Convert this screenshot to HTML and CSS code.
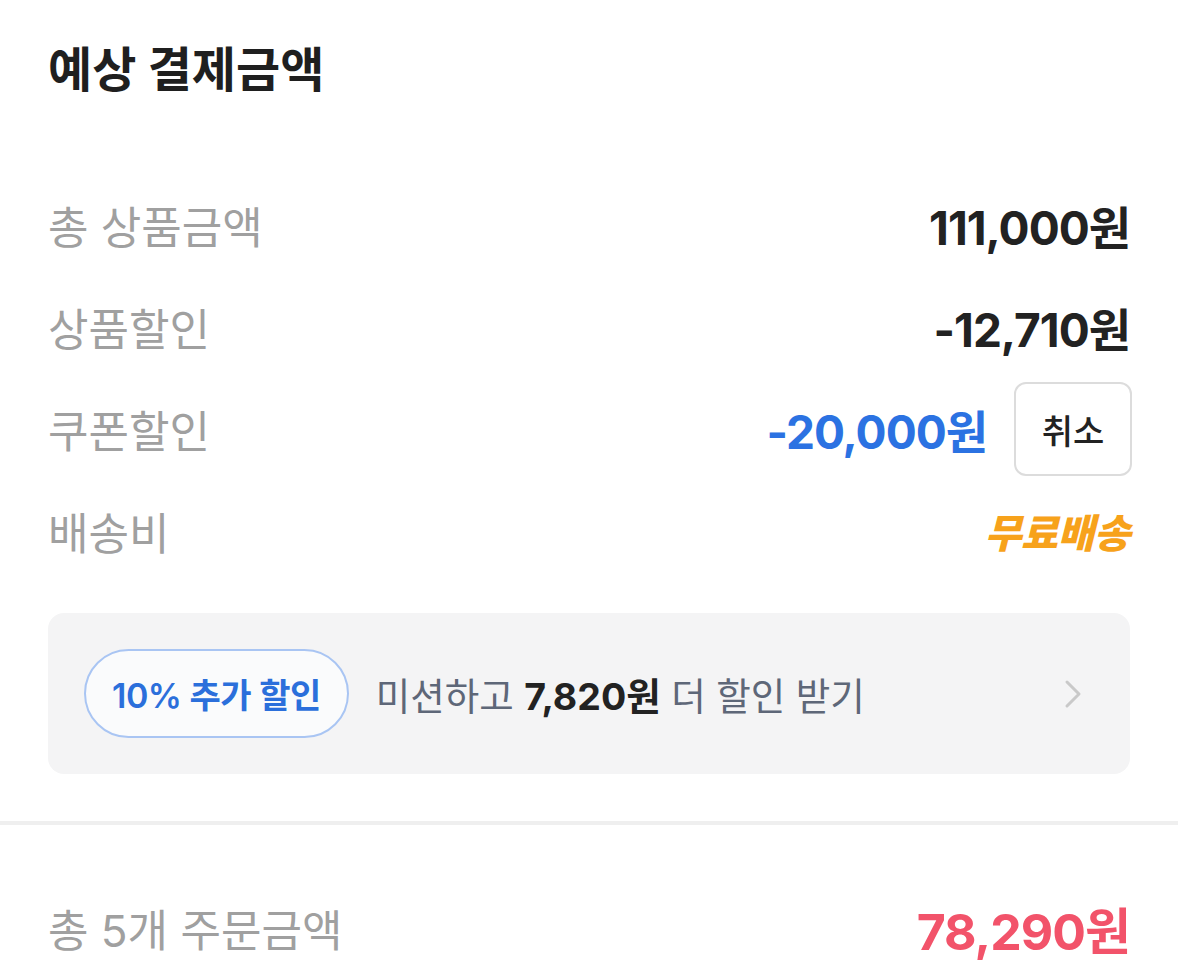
FILE: index.html
```html
<!DOCTYPE html>
<html lang="ko">
  <head>
    <meta charset="UTF-8" />
    <meta name="viewport" content="width=device-width, initial-scale=1.0" />
    <title>예상 결제금액</title>
    <link rel="stylesheet" href="styles.css">
  </head>
  <body>
    <section class="payment-summary">
      <h1>예상 결제금액</h1>
      <ul class="price-list">
        <li class="price-row">
          <span class="price-label">총 상품금액</span>
          <span class="price-value">111,000원</span>
        </li>
        <li class="price-row">
          <span class="price-label">상품할인</span>
          <span class="price-value">-12,710원</span>
        </li>
        <li class="price-row">
          <span class="price-label">쿠폰할인</span>
          <div class="coupon-value">
            <span class="price-value coupon">-20,000원</span>
            <button class="cancel-button">취소</button>
          </div>
        </li>
        <li class="price-row">
          <span class="price-label">배송비</span>
          <span class="price-value free-shipping">무료배송</span>
        </li>
      </ul>
      <a class="mission-box" href="#">
        <span class="mission-badge">10% 추가 할인</span>
        <span class="mission-text">미션하고 <strong>7,820원</strong> 더 할인 받기</span>
        <svg class="mission-arrow" width="18" height="30" viewBox="0 0 18 30">
          <path d="M3 3 L15 15 L3 27" fill="none" stroke="#c9c9c9" stroke-width="3" stroke-linecap="round" stroke-linejoin="round" />
        </svg>
      </a>
    </section>
    <div class="divider"></div>
    <section class="order-total">
      <span class="price-label">총 5개 주문금액</span>
      <span class="total-value">78,290원</span>
    </section>
  </body>
</html>
```

FILE: styles.css
```css
body {
  margin: 0;
  padding: 0;
  background-color: #fff;
  font-family: Inter, "Noto Sans CJK KR", sans-serif;
  color: #222;
}

.payment-summary {
  padding: 40px 48px 0;
}

h1 {
  margin: 0;
  font-size: 48px;
  line-height: 60px;
  font-weight: 700;
  color: #1f1f1f;
}

.price-list {
  list-style: none;
  margin: 74px 0 0;
  padding: 0;
}

.price-row {
  display: flex;
  justify-content: space-between;
  align-items: center;
  height: 102px;
}

.price-label {
  font-size: 44px;
  font-weight: 400;
  color: #a0a0a0;
}

.price-value {
  font-size: 46px;
  font-weight: 700;
  color: #222;
  letter-spacing: -1px;
}

.coupon-value {
  display: flex;
  align-items: center;
  gap: 27px;
}

.price-value.coupon {
  color: #2b72e2;
}

.cancel-button {
  width: 118px;
  height: 94px;
  margin-right: -2px;
  background-color: #fff;
  border: 2px solid #dcdcdc;
  border-radius: 12px;
  font-family: inherit;
  font-size: 34px;
  font-weight: 500;
  color: #222;
  cursor: pointer;
}

.price-value.free-shipping {
  font-size: 40px;
  letter-spacing: -0.5px;
  color: #f7a21b;
  font-style: italic;
  font-weight: 800;
}

.mission-box {
  display: flex;
  align-items: center;
  margin-top: 31px;
  height: 161px;
  padding: 0 48px 0 36px;
  background-color: #f4f4f5;
  border-radius: 16px;
  text-decoration: none;
  box-sizing: border-box;
}

.mission-badge {
  display: flex;
  align-items: center;
  height: 89px;
  padding: 0 26px;
  box-sizing: border-box;
  border: 2px solid #a9c5f3;
  border-radius: 45px;
  background-color: #fafbfc;
  font-size: 34px;
  font-weight: 600;
  color: #2b6fdb;
  letter-spacing: -0.5px;
}

.mission-text {
  flex: 1;
  margin-left: 27px;
  font-size: 37.5px;
  color: #5e6778;
}

.mission-text strong {
  font-weight: 700;
  color: #222;
}

.divider {
  height: 4px;
  margin-top: 47px;
  background-color: #efefef;
}

.order-total {
  display: flex;
  justify-content: space-between;
  align-items: center;
  height: 102px;
  margin-top: 52px;
  padding: 0 48px;
}

.total-value {
  font-size: 50px;
  font-weight: 700;
  color: #f2536a;
  letter-spacing: -1px;
}
```
